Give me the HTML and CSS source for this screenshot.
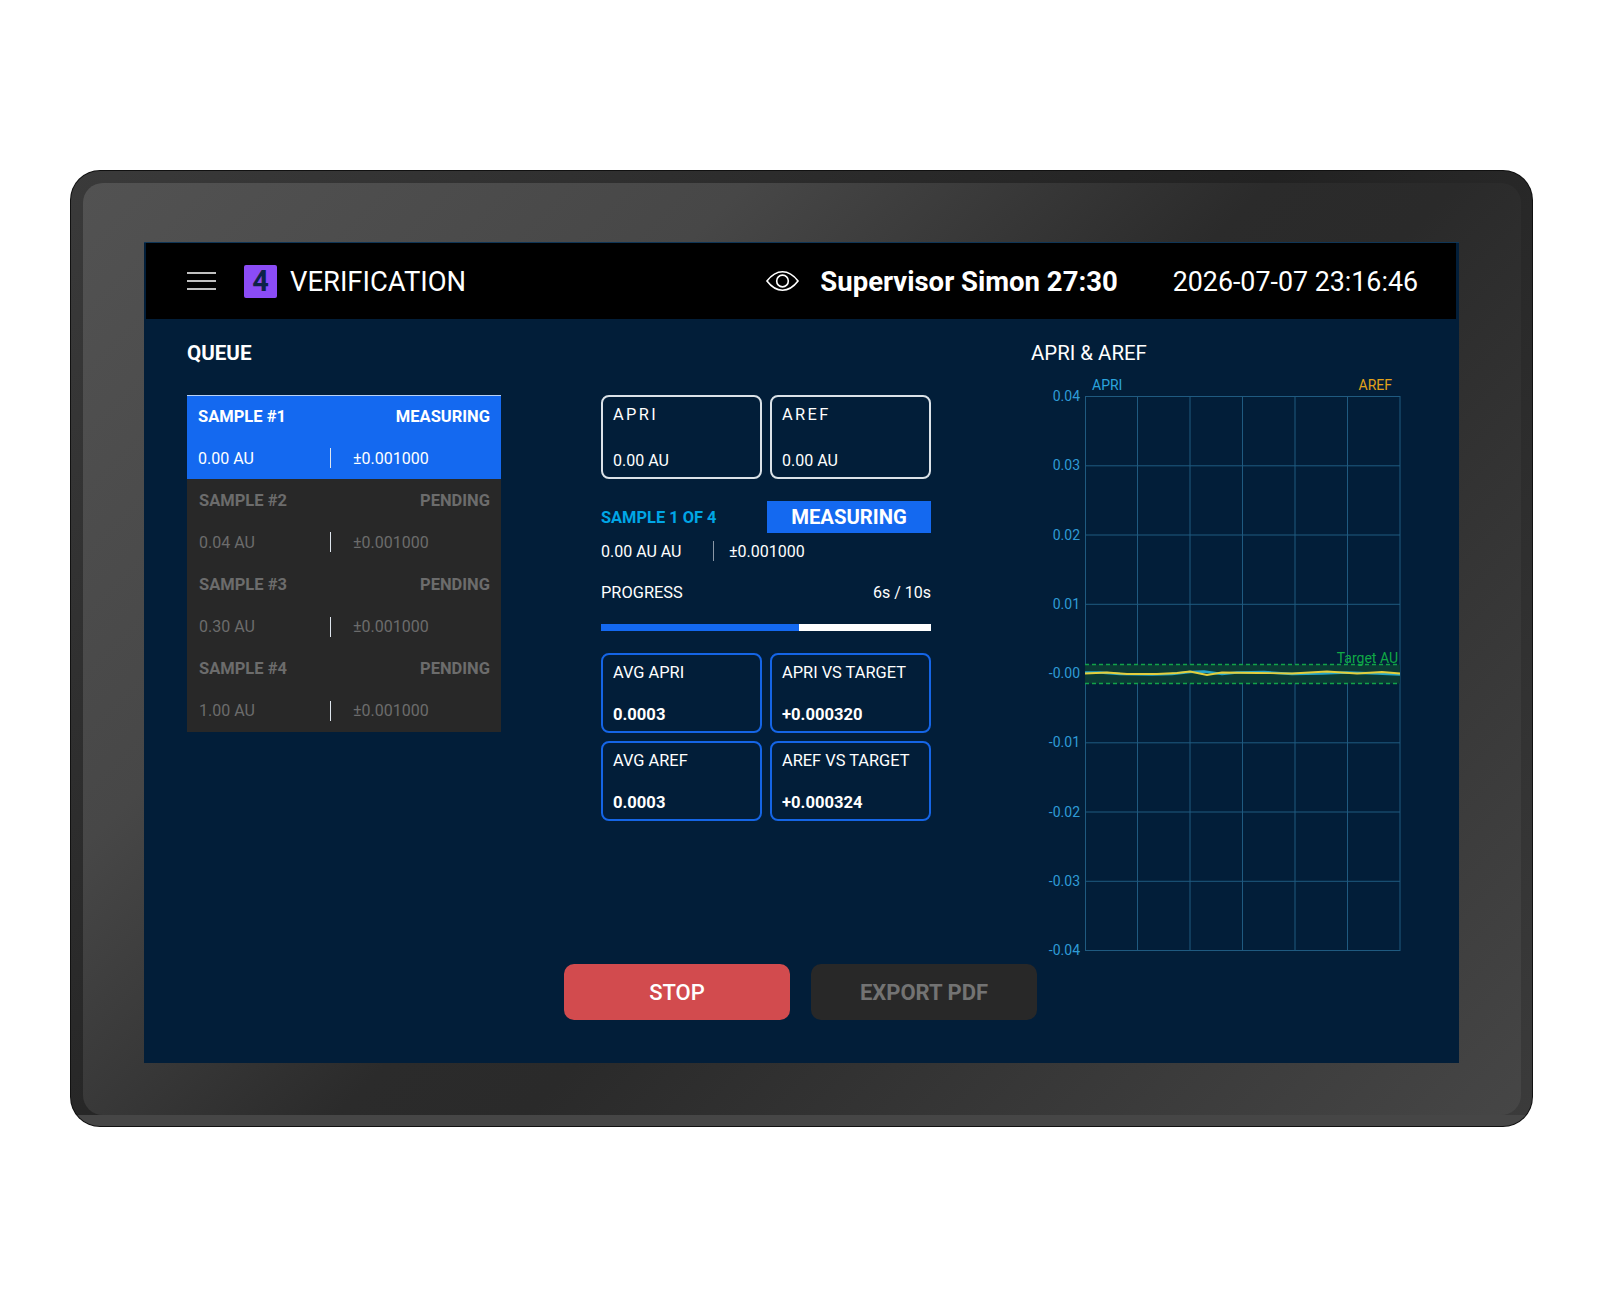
FILE: index.html
```html
<!DOCTYPE html>
<html lang="en">
<head>
<meta charset="utf-8">
<title>Verification</title>
<link rel="stylesheet" href="styles.css">
</head>
<body>
<div class="stage">
  <div class="bezel">
    <div class="bezel-face">
      <div class="screen">
        <header class="topbar">
          <svg class="menu-icon" width="29" height="18" viewBox="0 0 29 18"><path d="M0 1h29M0 9h29M0 17h29" stroke="#fff" stroke-width="1.6" fill="none"/></svg>
          <span class="step">4</span>
          <span class="title">VERIFICATION</span>
          <svg class="eye-icon" width="33" height="22" viewBox="0 0 34 22"><path d="M1 11C6 4.500 11 1.500 17 1.500S28 4.500 33 11C28 17.500 23 20.500 17 20.500S6 17.500 1 11Z" fill="none" stroke="#fff" stroke-width="1.700"/><circle cx="17" cy="11" r="6" fill="none" stroke="#fff" stroke-width="1.700"/></svg>
          <span class="user">Supervisor Simon 27:30</span>
          <span class="clock">2026-07-07 23:16:46</span>
        </header>
        <div class="content">
          <section class="queue">
            <h2 class="heading heading-bold">QUEUE</h2>
            <div class="queue-list">
              <div class="sample sample-active">
                <div class="sample-row sample-top"><span>SAMPLE #1</span><span>MEASURING</span></div>
                <div class="sample-row"><span class="sample-val">0.00 AU</span><span class="rule"></span><span>±0.001000</span></div>
              </div>
              <div class="sample">
                <div class="sample-row sample-top"><span>SAMPLE #2</span><span>PENDING</span></div>
                <div class="sample-row"><span class="sample-val">0.04 AU</span><span class="rule"></span><span>±0.001000</span></div>
              </div>
              <div class="sample">
                <div class="sample-row sample-top"><span>SAMPLE #3</span><span>PENDING</span></div>
                <div class="sample-row"><span class="sample-val">0.30 AU</span><span class="rule"></span><span>±0.001000</span></div>
              </div>
              <div class="sample">
                <div class="sample-row sample-top"><span>SAMPLE #4</span><span>PENDING</span></div>
                <div class="sample-row"><span class="sample-val">1.00 AU</span><span class="rule"></span><span>±0.001000</span></div>
              </div>
            </div>
          </section>
          <section class="measure">
            <div class="card-grid">
              <div class="card card-live"><span class="card-label spaced">APRI</span><span class="card-value">0.00 AU</span></div>
              <div class="card card-live"><span class="card-label spaced">AREF</span><span class="card-value">0.00 AU</span></div>
            </div>
            <div class="status-row">
              <span class="sample-count">SAMPLE 1 OF 4</span>
              <span class="status-badge">MEASURING</span>
            </div>
            <div class="reading"><span class="reading-val">0.00 AU AU</span><span class="rule rule-dim"></span><span>±0.001000</span></div>
            <div class="progress-head"><span>PROGRESS</span><span class="progress-time">6s / 10s</span></div>
            <div class="bar"><div class="bar-fill"></div></div>
            <div class="card-grid metrics">
              <div class="card card-metric"><span class="card-label">AVG APRI</span><span class="card-value strong">0.0003</span></div>
              <div class="card card-metric"><span class="card-label">APRI VS TARGET</span><span class="card-value strong">+0.000320</span></div>
              <div class="card card-metric"><span class="card-label">AVG AREF</span><span class="card-value strong">0.0003</span></div>
              <div class="card card-metric"><span class="card-label">AREF VS TARGET</span><span class="card-value strong">+0.000324</span></div>
            </div>
          </section>
          <section class="chart">
            <h2 class="heading chart-heading">APRI &amp; AREF</h2>
            <svg class="plot" width="372" height="590" viewBox="0 0 372 590">
              <text class="legend apri" x="60" y="14">APRI</text>
              <text class="legend aref" x="360" y="14" text-anchor="end">AREF</text>
              <g class="grid">
                <path d="M53 20.500h315M53 89.800h315M53 159h315M53 228.300h315M53 297.500h315M53 366.800h315M53 436h315M53 505.300h315M53 574.500h315"/>
                <path d="M53.500 20v555M105.500 20v555M158 20v555M210.500 20v555M263 20v555M315.500 20v555M368 20v555"/>
              </g>
              <g class="ticks">
                <text x="48" y="25">0.04</text>
                <text x="48" y="94">0.03</text>
                <text x="48" y="164">0.02</text>
                <text x="48" y="233">0.01</text>
                <text x="48" y="302">-0.00</text>
                <text x="48" y="371">-0.01</text>
                <text x="48" y="441">-0.02</text>
                <text x="48" y="510">-0.03</text>
                <text x="48" y="579">-0.04</text>
              </g>
              <rect class="band" x="53" y="288.500" width="315" height="19"/>
              <path class="band-edge" d="M53 288.500h315M53 307.500h315"/>
              <text class="target" x="366" y="287" text-anchor="end">Target AU</text>
              <path class="line-apri" d="M53 296.500L68 296.500 88 298 120 298.500 140 298 158 296 172 295.500 190 298 205 296.500 232 296 260 298 290 297.500 315 296.500 345 297.500 368 298.500"/>
              <path class="line-aref" d="M53 297.500L75 296.500 95 298 125 298 145 297 158 295.500 175 299 190 296.500 225 297 260 297.500 295 295.500 325 297.500 350 296 368 297.500"/>
            </svg>
          </section>
        </div>
        <div class="actions">
          <button class="action action-stop" type="button">STOP</button>
          <button class="action action-export" type="button">EXPORT PDF</button>
        </div>
      </div>
    </div>
  </div>
</div>
</body>
</html>
```
FILE: styles.css
```css
* { box-sizing: border-box; }
html, body { margin: 0; padding: 0; background: #fff; }
body { font-family: Roboto, "Liberation Sans", sans-serif; color: #fff; }
.stage { width: 1600px; height: 1300px; padding: 170px 67px 173px 70px; }
.bezel {
  height: 957px;
  padding: 13px 12px 12px 13px;
  border-radius: 30px;
  background:
    linear-gradient(to top, #464646 0, #464646 12px, transparent 12px),
    linear-gradient(135deg, #3a3a3a 0%, #222 50%, #3b3b3b 100%);
  box-shadow: inset 0 0 0 1px #111;
}
.bezel-face {
  height: 932px;
  padding: 59px 62px 52px 61px;
  border-radius: 20px;
  background: linear-gradient(135deg, #525252 0%, #474747 28%, #2b2b2b 50%, #2a2a2a 58%, #464646 100%);
}
.screen { height: 821px; background: #021e39; border-top: 1px solid #0f3556; }
.topbar {
  display: flex; align-items: center;
  height: 76px; margin: 0 3px 0 2px;
  padding: 0 38px 0 41px;
  background: #000;
}
.menu-icon { flex: none; }
.step {
  width: 33px; height: 33px; margin-left: 28px;
  display: flex; align-items: center; justify-content: center;
  background: #8b4cf6; border-radius: 2px;
  color: #0d2347; font-size: 29px; font-weight: 700; line-height: 1;
}
.title { margin: 2px 0 0 13px; font-size: 27.400px; }
.eye-icon { margin-left: auto; flex: none; }
.user { margin: 0 0 0 21px; font-size: 27.500px; font-weight: 700; }
.clock { margin: 2px 0 0 55px; font-size: 26.800px; }
.content { display: flex; height: 645px; padding: 22px 0 0 43px; }
.heading { margin: 0; font-size: 20.400px; line-height: 24px; font-weight: 400; }
.heading-bold { font-size: 20.600px; font-weight: 700; }
.chart-heading { margin-left: -1px; }
.queue { width: 314px; flex: none; }
.queue-list { margin-top: 30px; background: #282828; }
.sample {
  height: 84.250px; padding: 11px 11px 0 12px;
  color: #6c6c6c; font-size: 16px;
}
.sample-active {
  background: #1469f0; color: #fff;
  border-top: 1px solid #b9d2f5;
  padding-top: 10px;
  padding-left: 11px;
}
.sample-row { display: flex; align-items: center; height: 20px; }
.sample-top { justify-content: space-between; font-size: 16.500px; font-weight: 700; margin-bottom: 22px; }
.sample-val { width: 131px; }
.sample-active .sample-val { width: 132px; }
.rule { width: 1px; height: 20px; margin-right: 22px; background: #dfe6ee; }
.measure { width: 330px; flex: none; margin: 54px 0 0 100px; font-size: 16.400px; }
.card-grid { display: grid; grid-template-columns: 161px 161px; gap: 8px; }
.metrics { margin-top: 22px; }
.card {
  display: flex; flex-direction: column; justify-content: space-between;
  border-radius: 8px; padding: 0 10px;
}
.card-live { height: 84px; padding-top: 7.500px; padding-bottom: 6.500px; border: 2px solid #dbe2e8; }
.card-metric { height: 80px; padding-top: 7.500px; padding-bottom: 6.500px; border: 2px solid #1565e6; }
.card-label { line-height: 20px; }
.card-value { line-height: 20px; font-size: 16px; }
.spaced { letter-spacing: 2.400px; }
.strong { font-size: 16.600px; font-weight: 700; }
.status-row { display: flex; align-items: center; justify-content: space-between; margin-top: 22px; height: 32px; }
.sample-count { color: #00a6e6; font-weight: 700; }
.status-badge {
  width: 164px; height: 32px;
  display: flex; align-items: center; justify-content: center;
  background: #1469f0; font-size: 20.300px; font-weight: 700;
}
.reading { display: flex; align-items: center; height: 20px; margin-top: 8px; font-size: 16px; }
.reading-val { width: 112px; }
.rule-dim { margin-right: 15px; background: #8a97a6; }
.progress-head { display: flex; justify-content: space-between; line-height: 20px; margin-top: 22px; }
.progress-time { font-size: 16px; }
.bar { height: 7px; margin-top: 21px; background: #fff; }
.bar-fill { width: 60%; height: 100%; background: #1469f0; }
.chart { width: 372px; flex: none; margin-left: 101px; }
.plot { display: block; margin-top: 11px; font-family: Roboto, "Liberation Sans", sans-serif; }
.grid path { stroke: #1f5a80; stroke-width: 1; fill: none; }
.ticks text { fill: #2f9bd6; font-size: 14px; text-anchor: end; }
.legend { font-size: 14px; }
.apri { fill: #2ba4de; }
.aref { fill: #e3a21a; }
.band { fill: #0a3a35; }
.band-edge { stroke: #12a24a; stroke-width: 1.500; stroke-dasharray: 4 3; fill: none; }
.target { fill: #10a945; font-size: 14px; }
.line-apri { stroke: #25a5c9; stroke-width: 2.500; fill: none; }
.line-aref { stroke: #e3cf3c; stroke-width: 1.800; fill: none; }
.actions { display: flex; justify-content: center; gap: 21px; margin-right: 2px; }
.action {
  width: 226px; height: 56px; border: 0; border-radius: 10px; padding: 1px 0 0;
  font-family: inherit; font-size: 22px; line-height: 1;
}
.action-stop { background: #d24b4e; color: #fff; font-weight: 500; }
.action-export { background: #282828; color: #737373; font-weight: 700; }
```
